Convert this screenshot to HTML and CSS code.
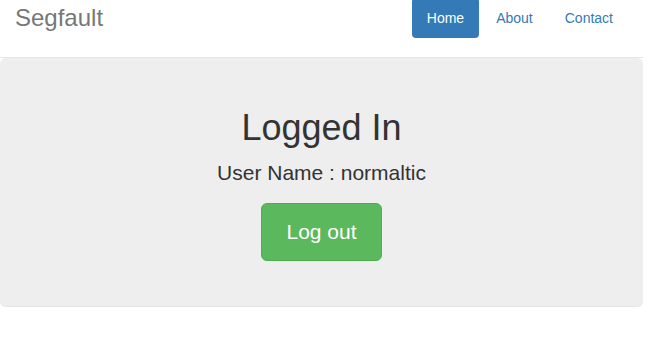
FILE: index.html
```html
<!DOCTYPE html>
<html lang="en">
<head>
<meta charset="utf-8">
<title>Segfault</title>
<link rel="stylesheet" href="styles.css">
</head>
<body>
<div class="container">
  <header class="header">
    <h3 class="brand">Segfault</h3>
    <nav>
      <ul class="nav-pills">
        <li class="active"><a href="#">Home</a></li>
        <li><a href="#">About</a></li>
        <li><a href="#">Contact</a></li>
      </ul>
    </nav>
  </header>
  <div class="jumbotron">
    <h1 class="title">Logged In</h1>
    <p class="lead">User Name : normaltic</p>
    <p class="actions"><a class="btn-success" href="#">Log out</a></p>
  </div>
</div>
</body>
</html>
```
FILE: styles.css
```css
* { box-sizing: border-box; }
html, body {
  margin: 0;
  padding: 0;
  background: #fff;
}
body {
  font-family: "Liberation Sans", Arial, sans-serif;
  font-size: 14px;
  line-height: 1.42857143;
  color: #333;
}
.container {
  width: 643px;
}
.header {
  margin-top: -2px;
  padding: 0 15px 19px 15px;
  border-bottom: 1px solid #e5e5e5;
  display: flex;
  justify-content: space-between;
  align-items: flex-start;
}
.brand {
  margin: 0;
  font-size: 24px;
  font-weight: 500;
  line-height: 40px;
  color: #777;
}
.nav-pills {
  list-style: none;
  margin: 0;
  padding: 0;
  display: flex;
  gap: 2px;
}
.nav-pills a {
  display: block;
  padding: 10px 15px;
  line-height: 20px;
  font-size: 14px;
  color: #337ab7;
  text-decoration: none;
  border-radius: 4px;
}
.nav-pills .active a {
  background: #337ab7;
  color: #fff;
}
.jumbotron {
  background: #eee;
  border-radius: 6px;
  border-bottom: 1px solid #e5e5e5;
  padding: 30px 15px;
  text-align: center;
}
.title {
  margin: 20px 0 10px;
  font-size: 36px;
  font-weight: 500;
  line-height: 1.1;
  color: #333;
}
.lead {
  margin: 0 0 15px;
  font-size: 21px;
  line-height: 30px;
}
.actions {
  margin: 0 0 15px;
  display: flex;
  justify-content: center;
}
.btn-success {
  display: block;
  padding: 14px 24px;
  font-size: 21px;
  line-height: 28px;
  color: #fff;
  background: #5cb85c;
  border: 1px solid #4cae4c;
  border-radius: 6px;
  text-decoration: none;
}
```
